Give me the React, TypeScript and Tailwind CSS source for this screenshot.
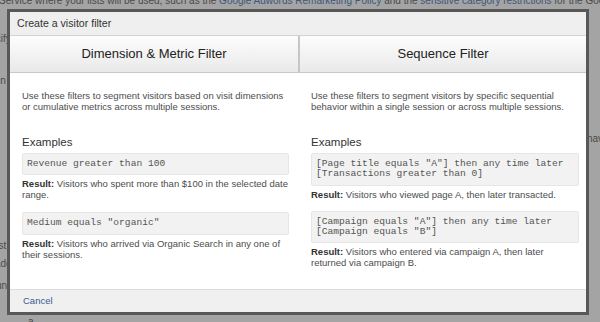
export default function App() {
  return (
    <div className="relative h-[322px] w-[600px] overflow-hidden bg-[#a4a4a4] font-['Liberation_Sans',Arial,sans-serif] text-[#4a4a4a]">
      {/* page behind the overlay */}
      <div className="-mt-[5px] whitespace-nowrap text-[10px] leading-[12px]">
        <p className="-ml-[1px]">
          Service where your lists will be used, such as the{" "}
          <span className="text-[#3f5679]">Google Adwords Remarketing Policy</span> and the{" "}
          <span className="text-[#3f5679]">sensitive category restrictions</span> for the Google Display
        </p>
        <p className="mt-[26px] -ml-[22px]">Specify the rules</p>
        <p className="mt-[30px] -ml-[2px]">in</p>
        <p className="mt-[46px] ml-[587px]">have</p>
        <p className="mt-[95px] -ml-[6px]">list</p>
        <p className="mt-[6px] -ml-[5px]">add</p>
        <p className="mt-[10px] -ml-[4px]">un</p>
        <p className="mt-[24px] ml-[28px]">a</p>
      </div>

      <div className="absolute left-[7px] top-[9px] flex h-[306px] w-[582px] flex-col border-[3px] border-[#585858] bg-white">
        <div className="flex h-[24px] items-center border-b border-[#d3d3d3] bg-[#efefef] px-[7px] text-[10.6px] text-[#333]">
          Create a visitor filter
        </div>

        <div className="flex h-[37px] gap-[2px] border-b border-[#c9c9c9] bg-[#c6c6c6]">
          <div className="flex w-[288px] items-center justify-center bg-gradient-to-b from-[#fdfdfd] to-[#e9e9e9] text-[13px] text-[#222]">
            Dimension &amp; Metric Filter
          </div>
          <div className="flex flex-1 items-center justify-center bg-gradient-to-b from-[#fdfdfd] to-[#e9e9e9] text-[13px] text-[#222]">
            Sequence Filter
          </div>
        </div>

        <div className="flex flex-1 text-[9.5px] leading-[11px] text-[#4d4d4d]">
          <div className="w-[290px] pl-[12px] pr-[11px] pt-[17px]">
            <p>
              Use these filters to segment visitors based on visit dimensions or cumulative metrics
              across multiple sessions.
            </p>
            <h3 className="mt-[23px] text-[11.5px] leading-[14px] text-[#333]">Examples</h3>
            <Code>Revenue greater than 100</Code>
            <Result>Visitors who spent more than $100 in the selected date range.</Result>
            <Code className="mt-[12px]">Medium equals "organic"</Code>
            <Result>Visitors who arrived via Organic Search in any one of their sessions.</Result>
          </div>
          <div className="w-[279px] pl-[11px] pt-[17px]">
            <p>
              Use these filters to segment visitors by specific sequential behavior within a single
              session or across multiple sessions.
            </p>
            <h3 className="mt-[23px] text-[11.5px] leading-[14px] text-[#333]">Examples</h3>
            <Code>
              [Page title equals "A"] then any time later
              <br />
              [Transactions greater than 0]
            </Code>
            <Result>Visitors who viewed page A, then later transacted.</Result>
            <Code className="mt-[11px]">
              [Campaign equals "A"] then any time later
              <br />
              [Campaign equals "B"]
            </Code>
            <Result>Visitors who entered via campaign A, then later returned via campaign B.</Result>
          </div>
        </div>

        <div className="flex h-[23px] items-center border-t border-[#dcdcdc] bg-[#f0f0f0] px-[13px] text-[9.5px] text-[#3c5a8c]">
          Cancel
        </div>
      </div>
    </div>
  );
}

function Code({ children, className = "" }: { children: React.ReactNode; className?: string }) {
  return (
    <div
      className={`mt-[4px] rounded-[2px] border border-[#e6e6e6] bg-[#f2f2f2] px-[4px] py-[5px] font-['Liberation_Mono','Courier_New',monospace] text-[9.6px] leading-[10.3px] whitespace-nowrap text-[#555] ${className}`}
    >
      {children}
    </div>
  );
}

function Result({ children }: { children: React.ReactNode }) {
  return (
    <p className="mt-[3px]">
      <b className="font-bold text-[#333]">Result:</b> {children}
    </p>
  );
}
